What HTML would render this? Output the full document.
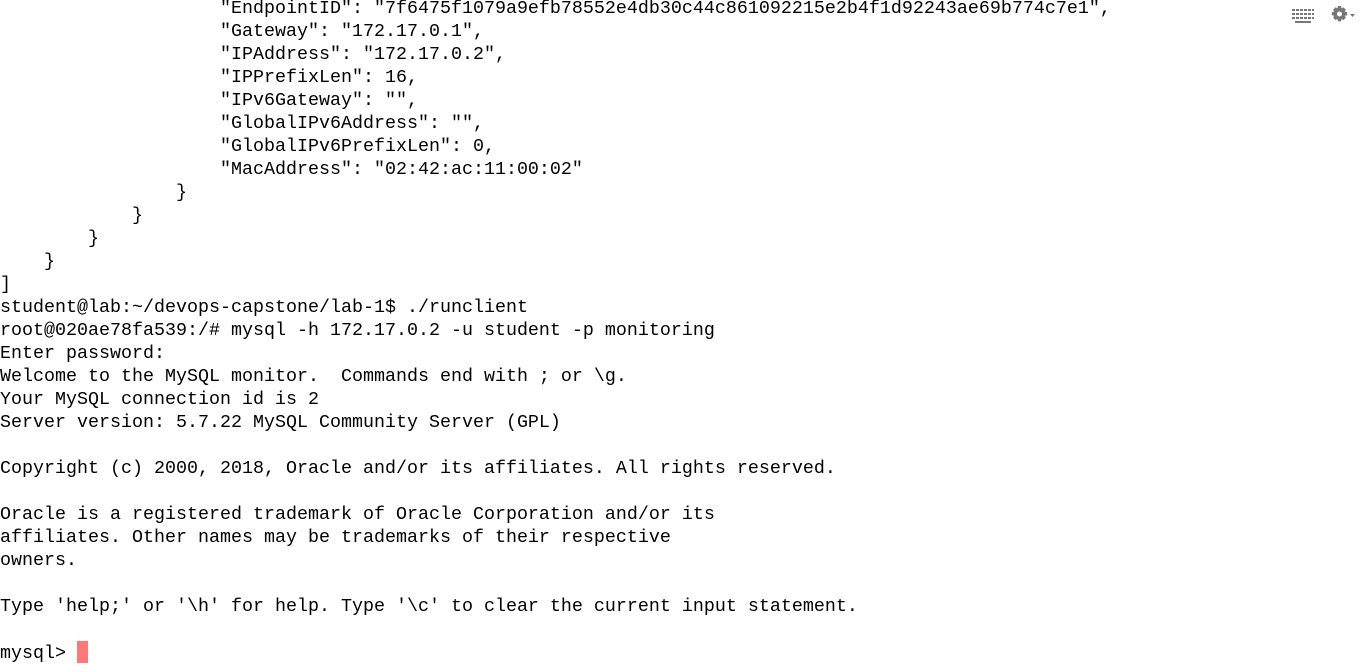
<!DOCTYPE html>
<html><head><meta charset="utf-8"><style>
html,body{margin:0;padding:0;background:#fff;width:1364px;height:672px;overflow:hidden}
pre{position:absolute;left:0;top:-3.5px;margin:0;font-family:"Liberation Mono",monospace;font-size:18.33px;line-height:23px;color:#000;white-space:pre}
.cur{display:inline-block;width:11px;height:22px;background:#f77;vertical-align:-5px}
</style></head><body>
<pre>                    "EndpointID": "7f6475f1079a9efb78552e4db30c44c861092215e2b4f1d92243ae69b774c7e1",
                    "Gateway": "172.17.0.1",
                    "IPAddress": "172.17.0.2",
                    "IPPrefixLen": 16,
                    "IPv6Gateway": "",
                    "GlobalIPv6Address": "",
                    "GlobalIPv6PrefixLen": 0,
                    "MacAddress": "02:42:ac:11:00:02"
                }
            }
        }
    }
]
student@lab:~/devops-capstone/lab-1$ ./runclient
root@020ae78fa539:/# mysql -h 172.17.0.2 -u student -p monitoring
Enter password:
Welcome to the MySQL monitor.  Commands end with ; or \g.
Your MySQL connection id is 2
Server version: 5.7.22 MySQL Community Server (GPL)

Copyright (c) 2000, 2018, Oracle and/or its affiliates. All rights reserved.

Oracle is a registered trademark of Oracle Corporation and/or its
affiliates. Other names may be trademarks of their respective
owners.

Type 'help;' or '\h' for help. Type '\c' to clear the current input statement.

mysql&gt; <span class="cur"></span></pre>
<svg style="position:absolute;left:1290px;top:4px" width="70" height="22" viewBox="0 0 70 22">
<g fill="#777">
<rect x="2" y="5" width="22" height="2"/><rect x="2" y="9" width="22" height="2"/><rect x="2" y="13" width="22" height="2"/><rect x="5" y="17" width="16" height="2"/>
<g fill="#fff"><rect x="5" y="5" width="1" height="10"/><rect x="9" y="5" width="1" height="10"/><rect x="13" y="5" width="1" height="10"/><rect x="17" y="5" width="1" height="10"/><rect x="21" y="5" width="1" height="10"/></g>
<path d="M48 2h3l.6 2.4 2-1 2.2 2.2-1 2 2.4.6v3l-2.4.6 1 2-2.2 2.2-2-1-.6 2.4h-3l-.6-2.4-2 1-2.2-2.2 1-2-2.4-.6v-3l2.4-.6-1-2 2.2-2.2 2 1z M49.5 7.5a2.5 2.5 0 1 0 .01 0z" fill-rule="evenodd"/>
<path d="M60 10h5l-2.5 3z"/>
</g></svg>
</body></html>
